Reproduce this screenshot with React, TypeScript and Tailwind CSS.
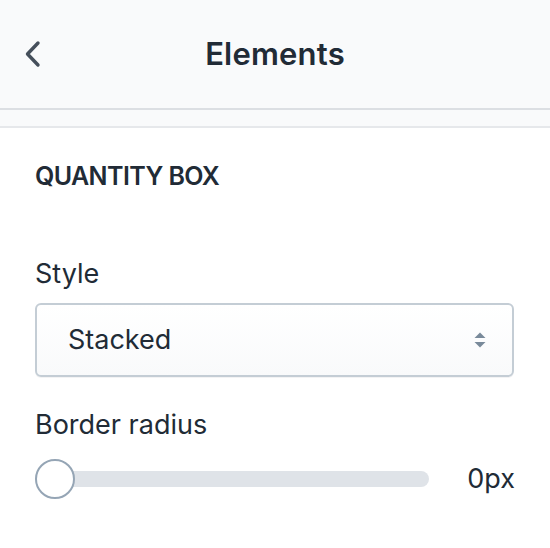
import React from 'react';

const ChevronLeft = () => (
  <svg width="20" height="28" viewBox="0 0 20 28" fill="none">
    <path d="M15 3 L4.5 14 L15 25" stroke="#454f5b" strokeWidth="3.4" strokeLinecap="round" strokeLinejoin="round" />
  </svg>
);

const SelectArrows = () => (
  <svg width="14" height="20" viewBox="0 0 14 20">
    <path d="M7 2.5 L12.5 8 L1.5 8 Z" fill="#798a9a" />
    <path d="M7 17.5 L12.5 12 L1.5 12 Z" fill="#798a9a" />
  </svg>
);

export default function App() {
  return (
    <div
      className="w-[550px] h-[548px] bg-white overflow-hidden text-[#212b36]"
      style={{ fontFamily: 'Inter, "Noto Sans", sans-serif' }}
    >
      <header className="h-[110px] bg-[#f9fafb] border-b-2 border-[#dcdfe3] grid grid-cols-[1fr_auto_1fr] items-center">
        <button className="justify-self-start pl-[23px] flex items-center">
          <ChevronLeft />
        </button>
        <h1 className="text-[31px] leading-[40px] font-semibold tracking-[0.2px]">Elements</h1>
        <div />
      </header>
      <div className="h-[18px] bg-[#f9fafb] border-b-2 border-[#e6e8eb]" />

      <section className="px-[35px] pt-[32px]">
        <h2 className="text-[25px] leading-[32px] font-semibold uppercase tracking-[-0.6px]">
          Quantity box
        </h2>

        <div className="mt-[62px]">
          <label className="block text-[27px] leading-[40px]">Style</label>
          <div className="mt-[9px] h-[74px] w-[479px] rounded-[6px] border-2 border-[#c4cdd5] bg-gradient-to-b from-white to-[#f9fafb] shadow-[0_1px_0_rgba(22,29,37,0.05)] flex items-center justify-between pl-[31px] pr-[25px]">
            <span className="text-[27px]">Stacked</span>
            <SelectArrows />
          </div>
        </div>

        <div className="mt-[28px]">
          <label className="block text-[27px] leading-[40px]">Border radius</label>
          <div className="mt-[14px] h-[40px] flex items-center">
            <div className="relative w-[394px] h-[16px] rounded-full bg-[#dfe3e8]">
              <div className="absolute left-0 top-1/2 -translate-y-1/2 w-[40px] h-[40px] rounded-full bg-white border-2 border-[#95a5b5]" />
            </div>
            <span className="ml-auto text-[27px]">0px</span>
          </div>
        </div>
      </section>
    </div>
  );
}
